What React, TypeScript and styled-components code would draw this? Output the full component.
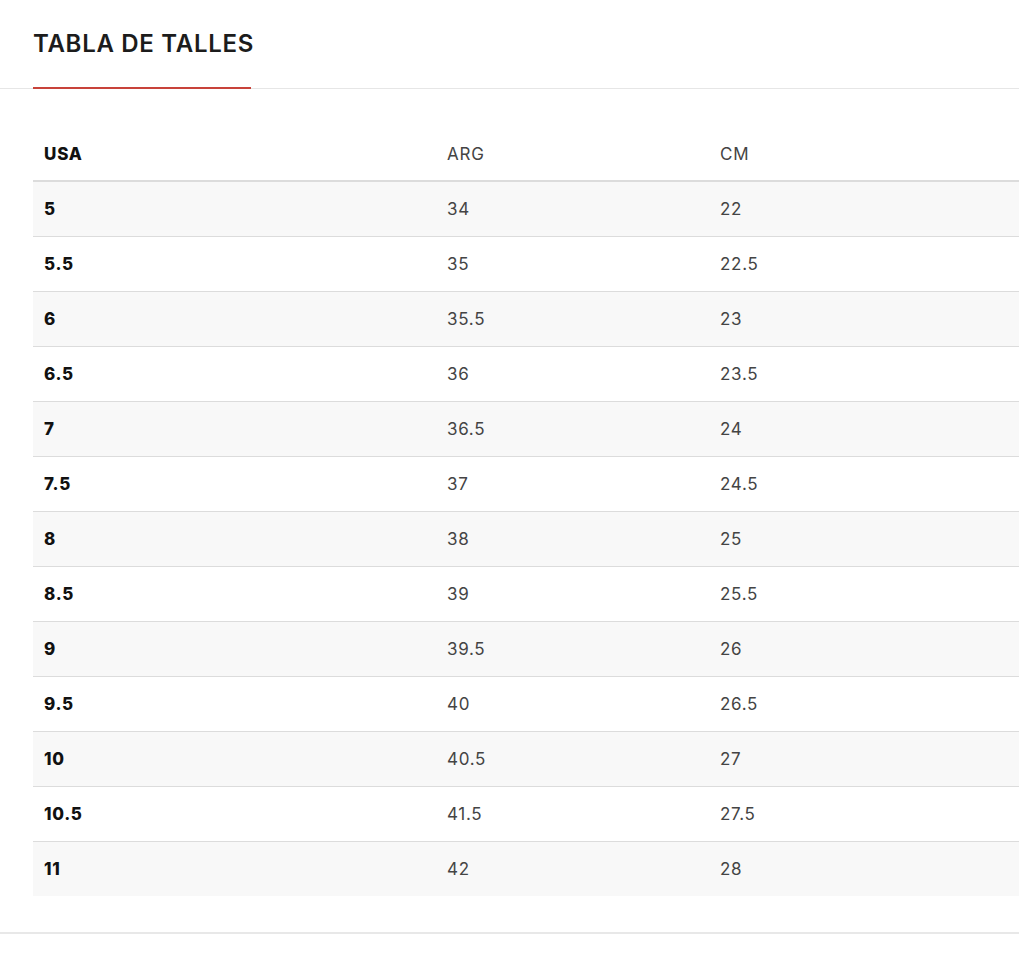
import React from "react";
import styled, { createGlobalStyle } from "styled-components";

const Global = createGlobalStyle`
  html, body { margin: 0; padding: 0; background: #fff; }
  body { font-family: Inter, "Noto Sans", sans-serif; }
`;

const Page = styled.div`
  width: 1019px;
  display: flex;
  flex-direction: column;
`;

const TabBar = styled.div`
  border-bottom: 1px solid #e6e6e6;
  padding-left: 33px;
  display: flex;
`;

const Tab = styled.div`
  font-family: Inter, sans-serif;
  font-size: 24px;
  font-weight: 600;
  color: #1c1c1c;
  letter-spacing: 0.7px;
  padding: 29px 0 29px;
  line-height: 29px;
  border-bottom: 2px solid #c8433a;
  margin-bottom: -1px;
  width: 218px;
  white-space: nowrap;
  box-sizing: border-box;
`;

const Body = styled.div`
  padding: 38px 0 36px 33px;
  border-bottom: 2px solid #e8e8e8;
`;

const Table = styled.table`
  width: 986px;
  border-collapse: collapse;
  table-layout: fixed;
`;

const HeadCell = styled.th<{ $bold?: boolean }>`
  text-align: left;
  height: 53px;
  padding: 0 0 0 11px;
  font-size: 17px;
  letter-spacing: 0.8px;
  font-weight: ${(p) => (p.$bold ? 800 : 400)};
  color: ${(p) => (p.$bold ? "#111" : "#444")};
  border-bottom: 2px solid #dcdcdc;
`;

const Row = styled.tr<{ $shaded: boolean }>`
  background: ${(p) => (p.$shaded ? "#f8f8f8" : "#fff")};
  border-bottom: 1px solid #dcdcdc;
  &:last-child { border-bottom: none; }
`;

const Cell = styled.td<{ $bold?: boolean }>`
  height: 54px;
  padding: 0 0 0 11px;
  font-size: 17px;
  letter-spacing: 0.7px;
  font-weight: ${(p) => (p.$bold ? 800 : 400)};
  color: ${(p) => (p.$bold ? "#111" : "#444")};
`;

const rows: [string, string, string][] = [
  ["5", "34", "22"],
  ["5.5", "35", "22.5"],
  ["6", "35.5", "23"],
  ["6.5", "36", "23.5"],
  ["7", "36.5", "24"],
  ["7.5", "37", "24.5"],
  ["8", "38", "25"],
  ["8.5", "39", "25.5"],
  ["9", "39.5", "26"],
  ["9.5", "40", "26.5"],
  ["10", "40.5", "27"],
  ["10.5", "41.5", "27.5"],
  ["11", "42", "28"],
];

export default function App() {
  return (
    <Page>
      <Global />
      <TabBar>
        <Tab>TABLA DE TALLES</Tab>
      </TabBar>
      <Body>
        <Table>
          <colgroup>
            <col style={{ width: 403 }} />
            <col style={{ width: 273 }} />
            <col style={{ width: 310 }} />
          </colgroup>
          <thead>
            <tr>
              <HeadCell $bold>USA</HeadCell>
              <HeadCell>ARG</HeadCell>
              <HeadCell>CM</HeadCell>
            </tr>
          </thead>
          <tbody>
            {rows.map((r, i) => (
              <Row key={r[0]} $shaded={i % 2 === 0}>
                <Cell $bold>{r[0]}</Cell>
                <Cell>{r[1]}</Cell>
                <Cell>{r[2]}</Cell>
              </Row>
            ))}
          </tbody>
        </Table>
      </Body>
    </Page>
  );
}
